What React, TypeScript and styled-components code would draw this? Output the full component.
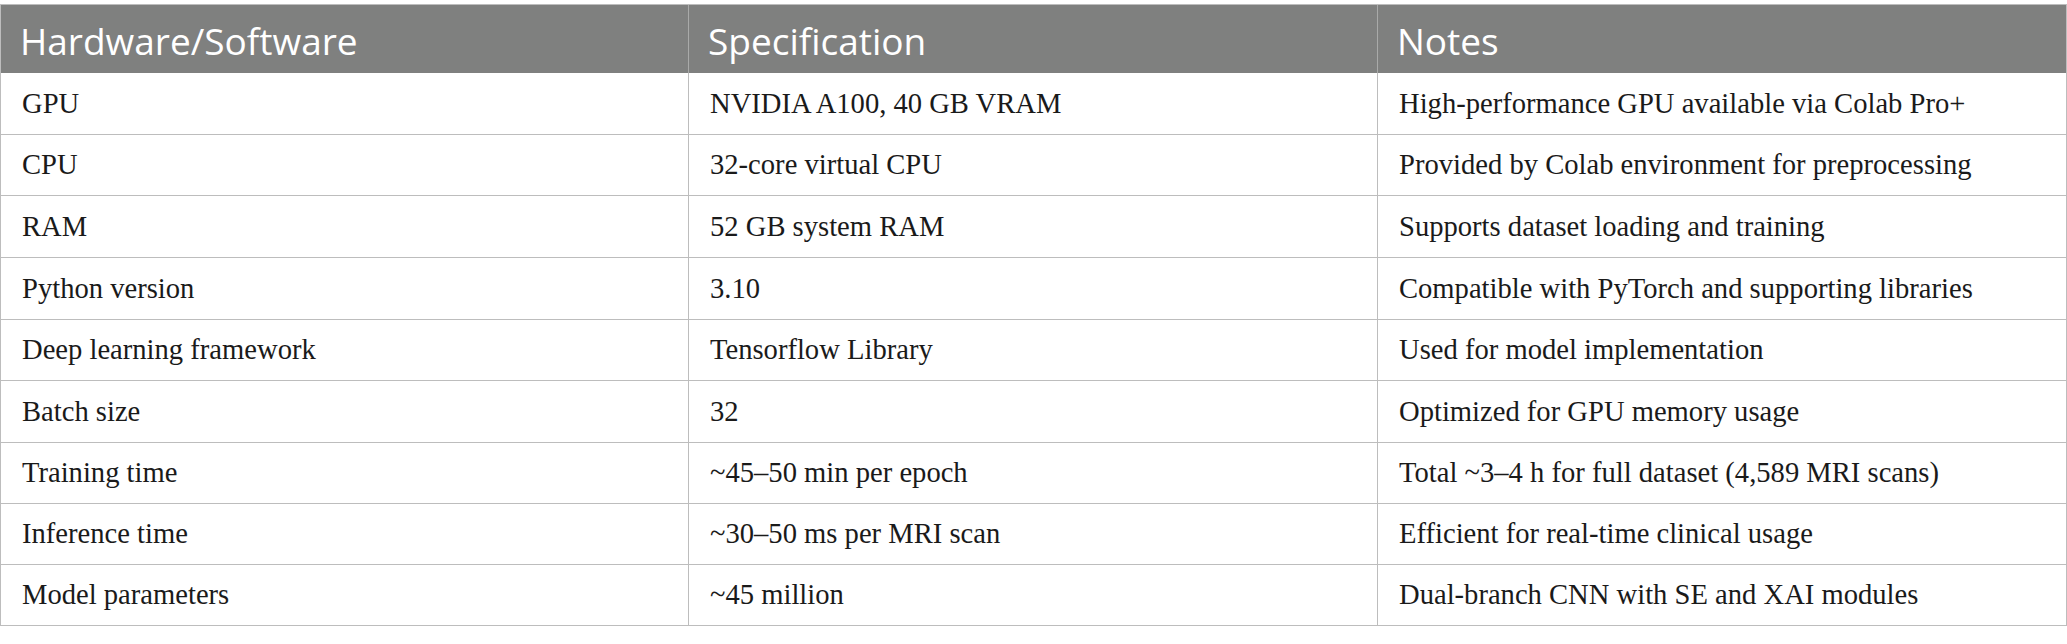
import React from "react";
import styled, { createGlobalStyle } from "styled-components";

const Global = createGlobalStyle`
  html, body { margin: 0; padding: 0; background: #ffffff; }
  body { width: 2067px; }
`;

const Page = styled.div`
  padding-top: 4px;
`;

const Table = styled.div`
  display: grid;
  grid-template-columns: 688px 689px 689px;
  grid-template-rows: 68px 62px 61px 62px 62px 61px 62px 61px 61px 61px;
  border-top: 1px solid #bdbdbd;
  border-left: 1px solid #bdbdbd;
  width: 2067px;
  box-sizing: border-box;
`;

const Row = styled.div`
  display: contents;
`;

const HeadCell = styled.div`
  box-sizing: border-box;
  background: #7f807f;
  color: #ffffff;
  font-family: "Open Sans", "Noto Sans", sans-serif;
  font-size: 37px;
  font-weight: 400;
  display: flex;
  align-items: center;
  padding: 3px 20px 0 19px;
  border-right: 1px solid #a9aaa9;
  &:last-child { border-right: 1px solid #bdbdbd; }
`;

const Cell = styled.div`
  box-sizing: border-box;
  background: #ffffff;
  color: #1a1a1a;
  font-family: "Liberation Serif", "Times New Roman", serif;
  font-size: 28.6px;
  display: flex;
  align-items: center;
  padding: 0 20px 0 21px;
  border-right: 1px solid #bdbdbd;
  border-bottom: 1px solid #bdbdbd;
`;

const headers = ["Hardware/Software", "Specification", "Notes"];

const rows: [string, string, string][] = [
  ["GPU", "NVIDIA A100, 40 GB VRAM", "High-performance GPU available via Colab Pro+"],
  ["CPU", "32-core virtual CPU", "Provided by Colab environment for preprocessing"],
  ["RAM", "52 GB system RAM", "Supports dataset loading and training"],
  ["Python version", "3.10", "Compatible with PyTorch and supporting libraries"],
  ["Deep learning framework", "Tensorflow Library", "Used for model implementation"],
  ["Batch size", "32", "Optimized for GPU memory usage"],
  ["Training time", "~45–50 min per epoch", "Total ~3–4 h for full dataset (4,589 MRI scans)"],
  ["Inference time", "~30–50 ms per MRI scan", "Efficient for real-time clinical usage"],
  ["Model parameters", "~45 million", "Dual-branch CNN with SE and XAI modules"],
];

export default function App() {
  return (
    <>
      <Global />
      <Page>
        <Table>
          <Row>
            {headers.map((h) => (
              <HeadCell key={h}>{h}</HeadCell>
            ))}
          </Row>
          {rows.map((r) => (
            <Row key={r[0]}>
              {r.map((c, i) => (
                <Cell key={i}>{c}</Cell>
              ))}
            </Row>
          ))}
        </Table>
      </Page>
    </>
  );
}
